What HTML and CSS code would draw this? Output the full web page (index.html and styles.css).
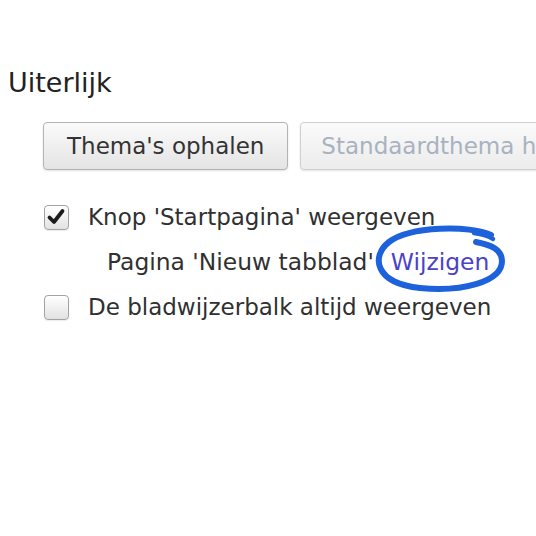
FILE: index.html
```html
<!DOCTYPE html>
<html lang="nl">
<head>
    <meta charset="UTF-8">
    <meta name="viewport" content="width=device-width, initial-scale=1.0">
    <title>Instellingen - Uiterlijk</title>
    <link rel="stylesheet" href="styles.css">
</head>
<body>
    <div class="page">
        <!-- Sectie: Uiterlijk -->
        <h3 class="section-title">Uiterlijk</h3>

        <div class="button-row">
            <button class="btn">Thema's ophalen</button>
            <button class="btn btn-disabled" disabled>Standaardthema herstellen</button>
        </div>

        <div class="options">
            <div class="option-row">
                <span class="checkbox">
                    <svg viewBox="0 0 24 24" width="24" height="24">
                        <path d="M5.5 12.5 L10 17 L18.5 6" fill="none" stroke="#1a1a1a" stroke-width="3.8" stroke-linecap="round" stroke-linejoin="round"/>
                    </svg>
                </span>
                <span class="option-label">Knop 'Startpagina' weergeven</span>
            </div>

            <div class="option-row sub-row">
                <span class="option-label">Pagina 'Nieuw tabblad'</span>
                <a class="link" href="#">Wijzigen</a>
            </div>

            <div class="option-row">
                <span class="checkbox"></span>
                <span class="option-label">De bladwijzerbalk altijd weergeven</span>
            </div>
        </div>

        <!-- markering rond de link -->
        <svg class="scribble" viewBox="0 0 134 70" width="134" height="70">
            <path d="M117 10 C96 0, 36 1, 15 17 C-3 31, 0 58, 46 63 C88 67, 128 57, 128 36 C128 25, 118 20, 102 17"
                  fill="none" stroke="#1d62db" stroke-width="6" stroke-linecap="round"/>
            <path d="M100 8 C108 9, 115 11, 119 14"
                  fill="none" stroke="#1d62db" stroke-width="4.5" stroke-linecap="round"/>
        </svg>
    </div>
</body>
</html>
```

FILE: styles.css
```css
html, body {
    margin: 0;
    padding: 0;
    background: #ffffff;
    overflow: hidden;
}

body {
    font-family: 'DejaVu Sans', 'Verdana', sans-serif;
    color: #303030;
    width: 536px;
    height: 536px;
}

.page {
    position: relative;
    padding-top: 67px;
}

.section-title {
    margin: 0 0 23px 8px;
    font-size: 27px;
    font-weight: normal;
    line-height: 32px;
    color: #222;
}

.button-row {
    display: flex;
    gap: 12px;
    margin-left: 43px;
    white-space: nowrap;
}

.btn {
    height: 48px;
    padding: 0 23px;
    font-family: inherit;
    font-size: 23px;
    color: #333;
    border: 1px solid #b3b3b3;
    border-radius: 4px;
    background: linear-gradient(to bottom, #fbfbfb, #e4e4e4);
    box-shadow: 0 1px 2px rgba(0, 0, 0, 0.12);
    flex-shrink: 0;
}

.btn-disabled {
    padding: 0 20px;
    color: #a9b2bf;
    border-color: #cfcfcf;
    background: linear-gradient(to bottom, #fafafa, #ececec);
}

.options {
    display: flex;
    flex-direction: column;
    gap: 1px;
    margin-top: 25px;
}

.option-row {
    display: flex;
    align-items: center;
    height: 44px;
    margin-left: 44px;
    font-size: 23px;
    white-space: nowrap;
}

.sub-row {
    margin-left: 107px;
    font-size: 23.4px;
}

.checkbox {
    display: inline-block;
    width: 23px;
    height: 23px;
    margin-right: 19px;
    border: 1px solid #a2a2a2;
    border-radius: 4px;
    background: linear-gradient(to bottom, #ffffff, #e2e2e2);
    box-shadow: inset 0 1px 1px rgba(255, 255, 255, 0.8), 0 1px 1px rgba(0, 0, 0, 0.08);
}

.checkbox svg {
    display: block;
    margin: -1px 0 0 -1px;
}

.link {
    margin-left: 17px;
    color: #4a42c8;
    text-decoration: none;
}

.scribble {
    position: absolute;
    left: 374px;
    top: 225px;
    overflow: visible;
}
```
